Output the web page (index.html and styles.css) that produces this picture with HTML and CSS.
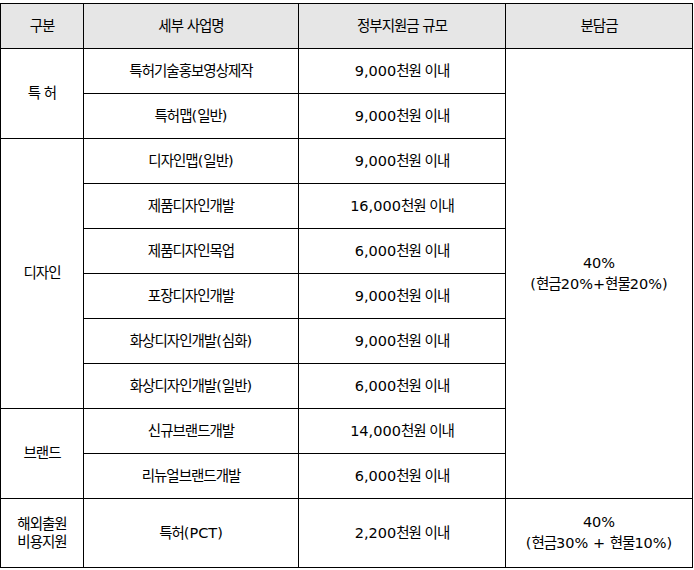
FILE: index.html
```html
<!DOCTYPE html>
<html lang="ko">
<head>
<meta charset="utf-8">
<link rel="stylesheet" href="styles.css">
</head>
<body>
<table class="support">
  <colgroup>
    <col class="c1">
    <col class="c2">
    <col class="c3">
    <col class="c4">
  </colgroup>
  <thead>
    <tr>
      <th>구분</th>
      <th>세부 사업명</th>
      <th>정부지원금 규모</th>
      <th>분담금</th>
    </tr>
  </thead>
  <tbody>
    <tr>
      <td rowspan="2">특 허</td>
      <td>특허기술홍보영상제작</td>
      <td><span class="n">9,000</span>천원 이내</td>
      <td rowspan="10"><span class="n">40%</span><br><span class="n">(</span>현금<span class="n">20%+</span>현물<span class="n">20%)</span></td>
    </tr>
    <tr>
      <td>특허맵<span class="n">(</span>일반<span class="n">)</span></td>
      <td><span class="n">9,000</span>천원 이내</td>
    </tr>
    <tr>
      <td rowspan="6">디자인</td>
      <td>디자인맵<span class="n">(</span>일반<span class="n">)</span></td>
      <td><span class="n">9,000</span>천원 이내</td>
    </tr>
    <tr>
      <td>제품디자인개발</td>
      <td><span class="n">16,000</span>천원 이내</td>
    </tr>
    <tr>
      <td>제품디자인목업</td>
      <td><span class="n">6,000</span>천원 이내</td>
    </tr>
    <tr>
      <td>포장디자인개발</td>
      <td><span class="n">9,000</span>천원 이내</td>
    </tr>
    <tr>
      <td>화상디자인개발<span class="n">(</span>심화<span class="n">)</span></td>
      <td><span class="n">9,000</span>천원 이내</td>
    </tr>
    <tr>
      <td>화상디자인개발<span class="n">(</span>일반<span class="n">)</span></td>
      <td><span class="n">6,000</span>천원 이내</td>
    </tr>
    <tr>
      <td rowspan="2">브랜드</td>
      <td>신규브랜드개발</td>
      <td><span class="n">14,000</span>천원 이내</td>
    </tr>
    <tr>
      <td>리뉴얼브랜드개발</td>
      <td><span class="n">6,000</span>천원 이내</td>
    </tr>
    <tr class="last">
      <td class="tight">해외출원<br>비용지원</td>
      <td>특허<span class="n">(PCT)</span></td>
      <td><span class="n">2,200</span>천원 이내</td>
      <td><span class="n">40%</span><br><span class="n">(</span>현금<span class="n">30% + </span>현물<span class="n">10%)</span></td>
    </tr>
  </tbody>
</table>
</body>
</html>
```
FILE: styles.css
```css
html, body {
  margin: 0;
  padding: 0;
  background: #ffffff;
}
body {
  padding-top: 3px;
  font-family: "DejaVu Sans", "Noto Sans CJK KR", sans-serif;
  font-size: 14.5px;
  color: #000000;
}
.support {
  border-collapse: collapse;
  table-layout: fixed;
  width: 692px;
}
.c1 { width: 83px; }
.c2 { width: 215px; }
.c3 { width: 207px; }
.c4 { width: 187px; }
.support th,
.support td {
  border: 1px solid #000000;
  padding: 0;
  height: 44px;
  text-align: center;
  vertical-align: middle;
  font-weight: normal;
  line-height: 21px;
  letter-spacing: -1px;
}
.support th {
  background: #e6e6e6;
}
.support .n {
  letter-spacing: 0;
}
.support tr.last td {
  height: 68px;
}
.support td.tight {
  line-height: 18px;
}
```
